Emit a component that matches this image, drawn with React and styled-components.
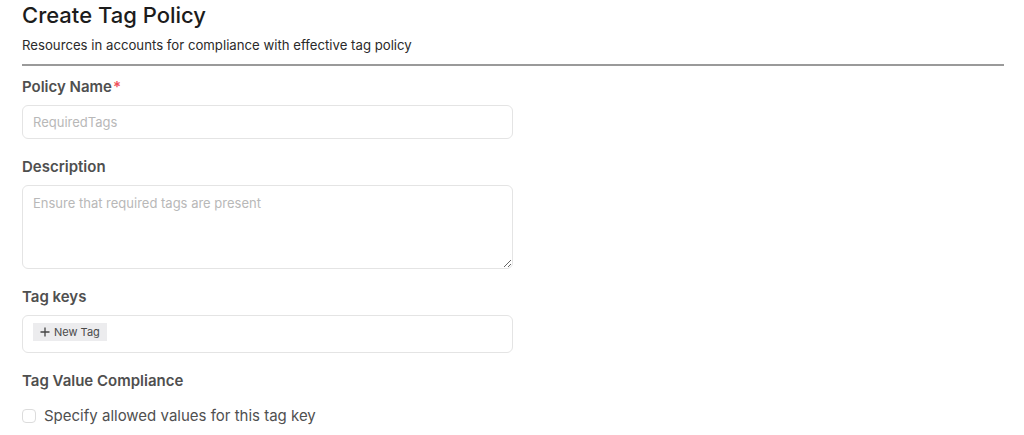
import React from "react"
import styled, { createGlobalStyle } from "styled-components"

const GlobalStyle = createGlobalStyle`
  html, body {
    margin: 0;
    padding: 0;
    background: #fff;
  }
  body {
    font-family: Inter, "Noto Sans", sans-serif;
    color: #222;
  }
`

const App = () => {
    return (
        <>
        <GlobalStyle />
        <Page>
            <Title>Create Tag Policy</Title>
            <Subtitle>Resources in accounts for compliance with effective tag policy</Subtitle>
            <Divider />

            <Field first>
                <Label>Policy Name<Required>*</Required></Label>
                <TextInput placeholder="RequiredTags" />
            </Field>

            <Field>
                <Label>Description</Label>
                <TextArea placeholder="Ensure that required tags are present" />
            </Field>

            <Field>
                <Label>Tag keys</Label>
                <TagBox>
                    <NewTag>
                        <svg width="10" height="10" viewBox="0 0 10 10">
                            <path d="M5 0.5v9M0.5 5h9" stroke="#444" strokeWidth="1.3" />
                        </svg>
                        New Tag
                    </NewTag>
                </TagBox>
            </Field>

            <Field>
                <Label>Tag Value Compliance</Label>
                <CheckRow>
                    <Check type="checkbox" />
                    Specify allowed values for this tag key
                </CheckRow>
            </Field>
        </Page>
        </>
    )
}

export default App


//-----------------------------------------------STYLES-----------------------------------------------//

const Page = styled.div`
    padding: 0 20px 0 22px;
`
const Title = styled.h1`
    margin: 0;
    font-size: 22px;
    line-height: 30px;
    font-weight: 500;
    color: #1c1c1c;
`
const Subtitle = styled.p`
    margin: 6px 0 0;
    font-size: 13.2px;
    line-height: 18px;
    color: #2a2a2a;
`
const Divider = styled.hr`
    margin: 10px 0 0;
    border: none;
    height: 2px;
    background: #9a9a9a;
`
const Field = styled.div`
    width: 491px;
    margin-top: ${props => props.first ? "11px" : "18px"};
`
const Label = styled.div`
    font-size: 15px;
    line-height: 20px;
    font-weight: 600;
    color: #4f4f4f;
    margin-bottom: 8px;
`
const Required = styled.span`
    color: #f0505a;
    margin-left: 1px;
`
const inputBase = `
    box-sizing: border-box;
    width: 100%;
    border: 1px solid #e4e4e4;
    border-radius: 6px;
    font-family: Inter, "Noto Sans", sans-serif;
    font-size: 13px;
    color: #333;
    outline: none;
    &::placeholder {
        color: #b8b8b8;
    }
`
const TextInput = styled.input`
    ${inputBase}
    display: block;
    height: 34px;
    padding: 0 10px;
`
const TextArea = styled.textarea`
    ${inputBase}
    display: block;
    height: 84px;
    padding: 9px 10px;
    resize: vertical;
`
const TagBox = styled.div`
    box-sizing: border-box;
    height: 38px;
    border: 1px solid #e4e4e4;
    border-radius: 6px;
    padding: 7px 10px;
    display: flex;
    align-items: flex-start;
`
const NewTag = styled.div`
    display: flex;
    align-items: center;
    gap: 4px;
    height: 18px;
    padding: 0 7px;
    background: #ececee;
    font-size: 11px;
    color: #4a4a4a;
`
const CheckRow = styled.label`
    display: flex;
    align-items: center;
    gap: 8px;
    margin-top: 15px;
    font-size: 15px;
    line-height: 20px;
    color: #505050;
`
const Check = styled.input`
    appearance: none;
    margin: 0;
    width: 14px;
    height: 14px;
    border: 1px solid #dcdcdc;
    border-radius: 4px;
    background: #fff;
`
